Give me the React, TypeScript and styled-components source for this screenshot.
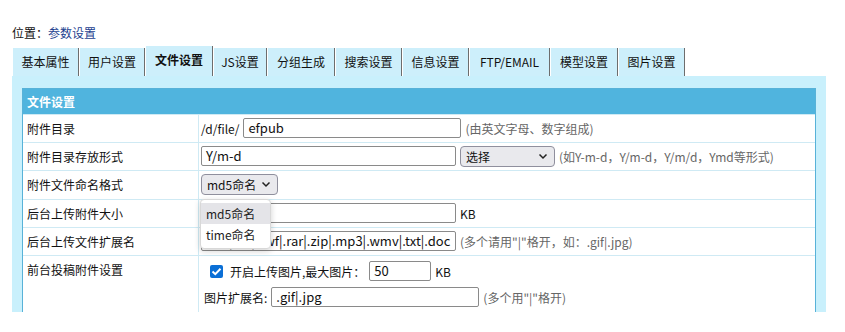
import React from "react";
import styled, { createGlobalStyle } from "styled-components";

const GlobalStyle = createGlobalStyle`
  body {
    margin: 0;
    background: #ffffff;
    font-family: "Noto Sans CJK SC", "Noto Sans", sans-serif;
    font-size: 12px;
    color: #222;
  }
`;

const PageEl = styled.div`
  width: 814px;
  padding: 24px 0 0 12px;
`;

const CrumbEl = styled.div`
  height: 18px;
  line-height: 18px;
  font-size: 12px;
  color: #111;

  a {
    color: #1d3f8f;
    text-decoration: none;
  }
`;

const TabsEl = styled.div`
  display: flex;
  align-items: flex-end;
  height: 34px;
`;

const TabEl = styled.div<{ $active?: boolean; $w: number }>`
  width: ${({ $w }) => $w}px;
  height: ${({ $active }) => ($active ? 30 : 28)}px;
  line-height: 28px;
  box-sizing: border-box;
  text-align: center;
  background: #cdeffb;
  border-left: 1px solid #ffffff;
  border-right: 1px solid #6d6d6d;
  font-size: 12px;
  font-weight: ${({ $active }) => ($active ? 700 : 400)};
  color: #111;
  white-space: nowrap;
`;

const PanelEl = styled.div`
  height: 236px;
  overflow: hidden;
  box-sizing: border-box;
  background: #c9f0fc;
  padding: 12px 10px 0;
`;

const TableEl = styled.div`
  border: 1px solid #58b2d8;
  border-bottom: none;
  background: #ffffff;
  min-height: 230px;
`;

const HeadEl = styled.div`
  height: 25px;
  line-height: 25px;
  background: #50b4de;
  color: #ffffff;
  font-weight: 700;
  font-size: 12px;
  padding-left: 4px;
`;

const RowEl = styled.div<{ $h?: number }>`
  display: grid;
  grid-template-columns: 176px 1fr;
  border-top: 1px solid #cfeaf4;
  min-height: ${({ $h }) => $h || 27}px;
`;

const LabelEl = styled.div`
  padding: 5px 4px;
  line-height: 17px;
  font-size: 12px;
  color: #111;
  border-right: 1px solid #cfeaf4;
`;

const ValueEl = styled.div<{ $pad?: number }>`
  display: flex;
  flex-direction: column;
  justify-content: center;
  gap: 6px;
  padding: ${({ $pad }) => ($pad ? `${$pad}px 2px 6px` : "0 2px 1px")};
`;

const LineEl = styled.div<{ $indent?: number }>`
  display: flex;
  align-items: center;
  gap: 4px;
  min-height: 20px;
  padding-left: ${({ $indent }) => $indent || 0}px;
  font-size: 12px;
  color: #111;
`;

const AnchorEl = styled.div`
  position: relative;
`;

const InputEl = styled.div<{ $w: number }>`
  width: ${({ $w }) => $w}px;
  height: 20px;
  box-sizing: border-box;
  border: 1px solid #8a8a8a;
  border-radius: 2px;
  padding: 0 4px;
  line-height: 18px;
  font-size: 13px;
  color: #111;
  white-space: nowrap;
  overflow: hidden;
  background: #fff;
`;

const NoteEl = styled.span`
  color: #666;
  font-size: 12px;
  white-space: nowrap;
`;

const SelectEl = styled.div<{ $w: number }>`
  width: ${({ $w }) => $w}px;
  height: 21px;
  box-sizing: border-box;
  border: 1px solid #8f8f9d;
  border-radius: 4px;
  background: #e9e9ed;
  display: flex;
  align-items: center;
  justify-content: space-between;
  padding: 0 6px 0 5px;
  font-size: 12px;
  color: #111;
  white-space: nowrap;
`;

const MenuEl = styled.div`
  position: absolute;
  left: -1px;
  top: 25px;
  width: 69px;
  padding: 3px 0;
  background: #ffffff;
  border: 1px solid #d8d8d8;
  border-radius: 4px;
  box-shadow: 0 2px 6px rgba(0, 0, 0, 0.18);
  z-index: 10;
`;

const OptionEl = styled.div<{ $hot?: boolean }>`
  height: 21px;
  line-height: 21px;
  padding-left: 5px;
  font-size: 12px;
  color: #222;
  background: ${({ $hot }) => ($hot ? "#e4e4e8" : "#ffffff")};
`;

const CheckEl = styled.span`
  width: 13px;
  height: 13px;
  border-radius: 2px;
  background: #0b6fd6;
  display: inline-flex;
  align-items: center;
  justify-content: center;
  margin-right: 3px;
`;

const Chevron = () => (
  <svg width="10" height="7" viewBox="0 0 10 7">
    <path d="M1.5 1.5 L5 5 L8.5 1.5" fill="none" stroke="#222" strokeWidth="1.5" />
  </svg>
);

const tabs = [
  { t: "基本属性", w: 67 },
  { t: "用户设置", w: 66 },
  { t: "文件设置", w: 68, active: true },
  { t: "JS设置", w: 54 },
  { t: "分组生成", w: 68 },
  { t: "搜索设置", w: 67 },
  { t: "信息设置", w: 67 },
  { t: "FTP/EMAIL", w: 81 },
  { t: "模型设置", w: 68 },
  { t: "图片设置", w: 67 },
];

export default function App() {
  return (
    <>
      <GlobalStyle />
      <PageEl>
        <CrumbEl>
          位置：<a href="#">参数设置</a>
        </CrumbEl>
        <TabsEl>
          {tabs.map((x) => (
            <TabEl key={x.t} $active={x.active} $w={x.w}>
              {x.t}
            </TabEl>
          ))}
        </TabsEl>
        <PanelEl>
          <TableEl>
            <HeadEl>文件设置</HeadEl>
            <RowEl>
              <LabelEl>附件目录</LabelEl>
              <ValueEl>
                <LineEl>
                  <span>/d/file/</span>
                  <InputEl $w={218}>efpub</InputEl>
                  <NoteEl>(由英文字母、数字组成)</NoteEl>
                </LineEl>
              </ValueEl>
            </RowEl>
            <RowEl>
              <LabelEl>附件目录存放形式</LabelEl>
              <ValueEl>
                <LineEl>
                  <InputEl $w={255}>Y/m-d</InputEl>
                  <SelectEl $w={95}>
                    选择
                    <Chevron />
                  </SelectEl>
                  <NoteEl>(如Y-m-d，Y/m-d，Y/m/d，Ymd等形式)</NoteEl>
                </LineEl>
              </ValueEl>
            </RowEl>
            <RowEl $h={28}>
              <LabelEl>附件文件命名格式</LabelEl>
              <ValueEl>
                <LineEl>
                  <AnchorEl>
                    <SelectEl $w={77}>
                      md5命名
                      <Chevron />
                    </SelectEl>
                    <MenuEl>
                      <OptionEl $hot>md5命名</OptionEl>
                      <OptionEl>time命名</OptionEl>
                    </MenuEl>
                  </AnchorEl>
                </LineEl>
              </ValueEl>
            </RowEl>
            <RowEl>
              <LabelEl>后台上传附件大小</LabelEl>
              <ValueEl>
                <LineEl>
                  <InputEl $w={255}>2048</InputEl>
                  <span>KB</span>
                </LineEl>
              </ValueEl>
            </RowEl>
            <RowEl>
              <LabelEl>后台上传文件扩展名</LabelEl>
              <ValueEl>
                <LineEl>
                  <InputEl $w={255}>.jpg|.gif|.swf|.rar|.zip|.mp3|.wmv|.txt|.doc</InputEl>
                  <NoteEl>(多个请用"|"格开，如：.gif|.jpg)</NoteEl>
                </LineEl>
              </ValueEl>
            </RowEl>
            <RowEl>
              <LabelEl>前台投稿附件设置</LabelEl>
              <ValueEl $pad={5}>
                <LineEl $indent={9}>
                  <CheckEl>
                    <svg width="11" height="9" viewBox="0 0 11 9">
                      <path d="M1.5 4.5 L4.3 7.2 L9.5 1.8" fill="none" stroke="#fff" strokeWidth="2" />
                    </svg>
                  </CheckEl>
                  <span>开启上传图片,最大图片：</span>
                  <InputEl $w={62}>50</InputEl>
                  <span>KB</span>
                </LineEl>
                <LineEl $indent={3}>
                  <span>图片扩展名:</span>
                  <InputEl $w={208}>.gif|.jpg</InputEl>
                  <NoteEl>(多个用"|"格开)</NoteEl>
                </LineEl>
              </ValueEl>
            </RowEl>
          </TableEl>
        </PanelEl>
      </PageEl>
    </>
  );
}
